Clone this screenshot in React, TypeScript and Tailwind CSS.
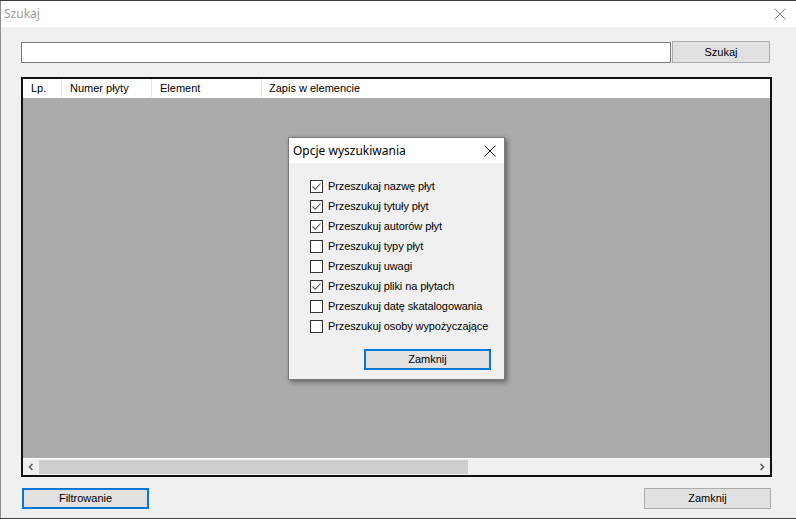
import React from 'react';

const ui = { fontFamily: '"Liberation Sans", Arial, sans-serif' };
const title = { fontFamily: '"Noto Sans", "Open Sans", sans-serif' };

const options = [
  { label: 'Przeszukaj nazwę płyt', checked: true },
  { label: 'Przeszukuj tytuły płyt', checked: true },
  { label: 'Przeszukuj autorów płyt', checked: true },
  { label: 'Przeszukuj typy płyt', checked: false },
  { label: 'Przeszukuj uwagi', checked: false },
  { label: 'Przeszukuj pliki na płytach', checked: true },
  { label: 'Przeszukuj datę skatalogowania', checked: false },
  { label: 'Przeszukuj osoby wypożyczające', checked: false },
];

function CloseX({ color }: { color: string }) {
  return (
    <svg width="12" height="12" viewBox="0 0 12 12">
      <path d="M0.5 0.5 L11.5 11.5 M11.5 0.5 L0.5 11.5" stroke={color} strokeWidth="1" fill="none" />
    </svg>
  );
}

function Checkbox({ checked }: { checked: boolean }) {
  return (
    <div className="w-[13px] h-[13px] border border-[#333333] bg-white flex items-center justify-center shrink-0">
      {checked && (
        <svg width="11" height="11" viewBox="0 0 11 11">
          <path d="M1.5 5.5 L4.2 8.2 L9.5 2.5" stroke="#555555" strokeWidth="1.1" fill="none" />
        </svg>
      )}
    </div>
  );
}

export default function App() {
  const cols = [
    { label: 'Lp.', w: 'w-[39px]' },
    { label: 'Numer płyty', w: 'w-[90px]' },
    { label: 'Element', w: 'w-[110px]' },
  ];

  return (
    <div className="relative w-[796px] h-[519px] bg-[#3d3d3d] pt-px overflow-hidden" style={ui}>
      {/* main window */}
      <div className="w-[796px] h-[517px] bg-[#f0f0f0] border-l border-[#8c8c8c] flex flex-col">
        <div className="h-[26px] bg-white flex items-center justify-between pl-[3px] pr-[10px] shrink-0">
          <span className="text-[12px] text-[#9a9a9a]" style={title}>Szukaj</span>
          <CloseX color="#8a8a8a" />
        </div>

        <div className="flex flex-col pl-[20px] pr-[24px] pt-[14px]">
          <div className="flex items-center gap-px h-[22px]">
            <div className="w-[650px] h-[21px] bg-white border border-[#7a7a7a]" />
            <button className="w-[98px] h-[22px] bg-[#e1e1e1] border border-[#adadad] text-[11px] text-black">
              Szukaj
            </button>
          </div>

          <div className="mt-[14px] w-[751px] h-[400px] border-2 border-[#111111] bg-[#ababab] flex flex-col">
            <div className="h-[19px] bg-white flex items-center text-[11px] text-black border-b border-white shrink-0">
              {cols.map((c) => (
                <div key={c.label} className={`${c.w} h-full border-r border-[#e5e5e5] pl-[8px] flex items-center`}>
                  {c.label}
                </div>
              ))}
              <div className="flex-1 h-full pl-[7px] flex items-center">Zapis w elemencie</div>
            </div>
            <div className="flex-1" />
            <div className="h-[17px] bg-[#f0f0f0] border-t border-white flex items-center shrink-0">
              <div className="w-[16px] h-full flex items-center justify-center">
                <svg width="8" height="8" viewBox="0 0 8 8">
                  <path d="M5.5 1 L2.5 4 L5.5 7" stroke="#606060" strokeWidth="1.6" fill="none" />
                </svg>
              </div>
              <div className="w-[429px] h-[14px] bg-[#cdcdcd]" />
              <div className="flex-1" />
              <div className="w-[16px] h-full flex items-center justify-center">
                <svg width="8" height="8" viewBox="0 0 8 8">
                  <path d="M2.5 1 L5.5 4 L2.5 7" stroke="#606060" strokeWidth="1.6" fill="none" />
                </svg>
              </div>
            </div>
          </div>

          <div className="mt-[11px] flex justify-between pl-px pr-px">
            <button className="w-[127px] h-[21px] bg-[#e1e1e1] border-2 border-[#0078d7] text-[11px] text-black">
              Filtrowanie
            </button>
            <button className="w-[127px] h-[21px] bg-[#e1e1e1] border border-[#adadad] text-[11px] text-black">
              Zamknij
            </button>
          </div>
        </div>
      </div>

      {/* modal dialog */}
      <div className="absolute left-[288px] top-[137px] w-[217px] h-[243px] bg-[#f0f0f0] border border-[#7a7a7a] shadow-[2px_2px_5px_rgba(0,0,0,0.45)] flex flex-col">
        <div className="h-[25px] bg-white flex items-center justify-between pl-[4px] pr-[8px] shrink-0">
          <span className="text-[12px] text-black" style={title}>Opcje wyszukiwania</span>
          <CloseX color="#111111" />
        </div>
        <div className="flex flex-col pl-[21px] pt-[17px] gap-[7px]">
          {options.map((o) => (
            <div key={o.label} className="flex items-center gap-[5px] h-[13px]">
              <Checkbox checked={o.checked} />
              <span className="text-[11px] tracking-[-0.1px] text-black whitespace-nowrap">{o.label}</span>
            </div>
          ))}
        </div>
        <div className="flex justify-end pr-[13px] mt-[16px]">
          <button className="w-[127px] h-[21px] bg-[#e1e1e1] border-2 border-[#0078d7] text-[11px] text-black">
            Zamknij
          </button>
        </div>
      </div>
    </div>
  );
}
